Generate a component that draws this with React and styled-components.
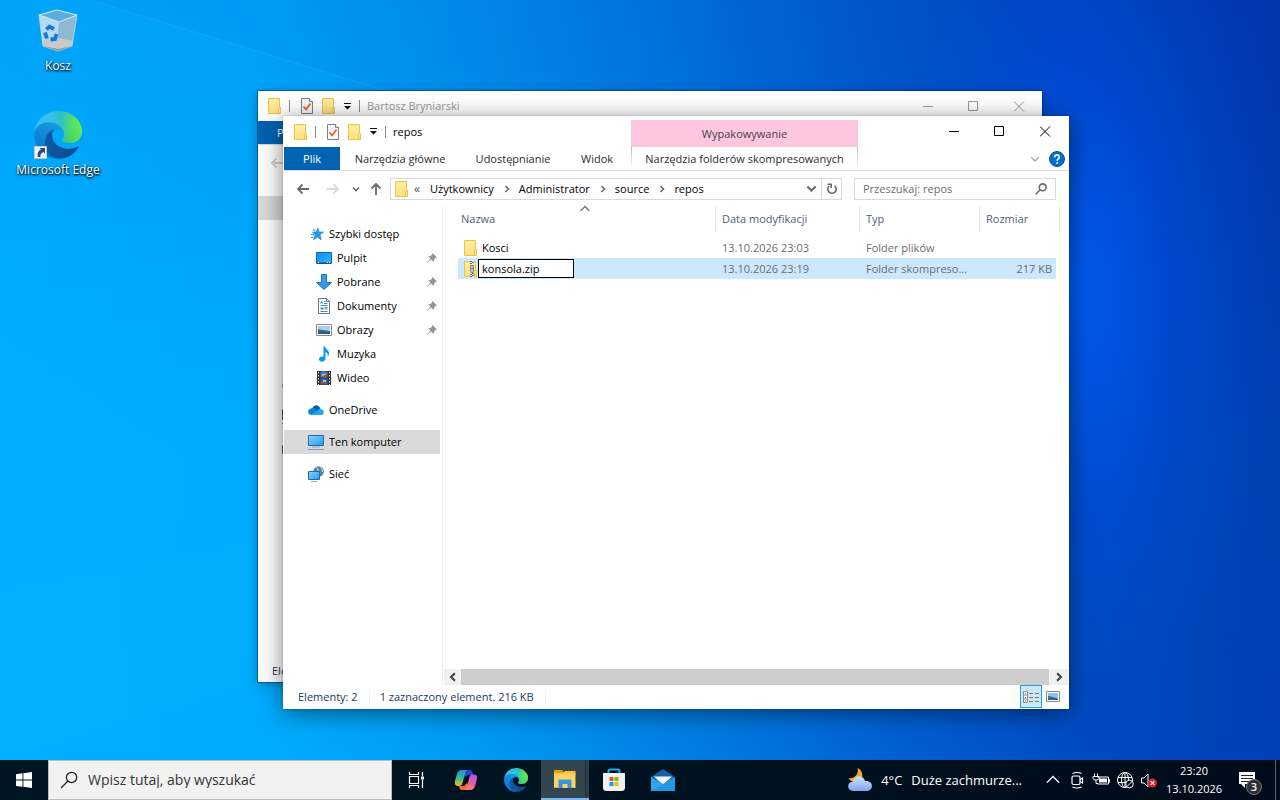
import React, { useId } from "react";
import styled, { createGlobalStyle, css } from "styled-components";

const GlobalStyle = createGlobalStyle`
  *, *::before, *::after { box-sizing: border-box; }
  body {
    margin: 0;
    font-family: "Open Sans", "Noto Sans", sans-serif;
    font-size: 11px;
    line-height: 16px;
    color: #000;
  }
  button, input { font: inherit; color: inherit; }
  a { color: inherit; text-decoration: none; }
  svg { display: block; flex: none; }
`;

/* ---------- desktop ---------- */

const Screen = styled.div`
  display: flex;
  flex-direction: column;
  height: 100vh;
  overflow: hidden;
`;

const Desktop = styled.main`
  position: relative;
  flex: 1;
  overflow: hidden;
  background:
    radial-gradient(ellipse 15% 58% at 84% 38%, rgba(0, 96, 255, 0.75), rgba(0, 80, 235, 0.35) 50%, rgba(0, 70, 220, 0) 100%),
    linear-gradient(180deg, rgba(0, 60, 180, 0.08), rgba(0, 200, 255, 0.06) 60%, rgba(0, 200, 255, 0.04)),
    linear-gradient(86deg, #00aeff 0%, #00a9fd 22%, #0096f0 37%, #007ae0 52%, #005acf 68%, #0044be 82%, #0036ae 100%);
`;

const Rays = styled.svg`
  position: absolute;
  inset: 0;
  width: 100%;
  height: 100%;
`;

const Shortcuts = styled.nav`
  position: relative;
  display: flex;
  flex-direction: column;
  align-items: center;
  gap: 37px;
  width: 116px;
  padding-top: 7px;
`;

const Shortcut = styled.a`
  display: flex;
  flex-direction: column;
  align-items: center;
  gap: 3px;
  color: #fff;
  font-size: 12px;
  white-space: nowrap;
  text-shadow: 0 1px 2px #000, 1px 1px 2px rgba(0, 0, 0, 0.8);
`;

/* ---------- window ---------- */

const Frame = styled.section`
  position: absolute;
  top: ${(p) => (p.$back ? 91 : 116)}px;
  left: ${(p) => (p.$back ? 258 : 283)}px;
  right: ${(p) => (p.$back ? 238 : 211)}px;
  bottom: ${(p) => (p.$back ? 78 : 51)}px;
  display: flex;
  flex-direction: column;
  padding: ${(p) => (p.$back ? 0 : "0 1px 1px")};
  background: #fff;
  box-shadow: ${(p) =>
    p.$back
      ? "0 0 0 1px rgba(0, 40, 80, 0.45), 0 2px 10px rgba(0, 0, 0, 0.3)"
      : "0 0 1px 0 rgba(0, 0, 0, 0.4), 0 4px 22px rgba(0, 0, 0, 0.5)"};
`;

const TitleBar = styled.header`
  display: flex;
  height: ${(p) => (p.$back ? 30 : 31)}px;
  color: ${(p) => (p.$back ? "#999" : "#000")};
`;

const TitleArea = styled.div`
  display: flex;
  align-items: center;
  width: 347px;
  padding-left: 10px;
`;

const QuickButton = styled.button`
  display: flex;
  align-items: center;
  justify-content: center;
  width: ${(p) => p.$w || 22}px;
  height: 22px;
  padding: 0;
  border: 0;
  background: none;
`;

const Bar = styled.span`
  width: 1px;
  height: 12px;
  margin: ${(p) => p.$m || "0 6px 0 7px"};
  background: #8c8c8c;
`;

const Title = styled.h1`
  margin: 0;
  font-size: 11px;
  line-height: 16px;
  font-weight: 400;
`;

const ContextLabel = styled.div`
  width: 227px;
  margin-top: 4px;
  background: #fec6df;
  color: #444;
  text-align: center;
  line-height: 27px;
`;

const Captions = styled.div`
  display: flex;
  margin-left: auto;
`;

const CaptionButton = styled.button`
  display: flex;
  align-items: center;
  justify-content: center;
  width: 46px;
  height: 30px;
  padding: 0;
  border: 0;
  background: none;
`;

const RibbonTabs = styled.div`
  display: flex;
  height: 24px;
  border-bottom: 1px solid #dadbdc;
`;

const RibbonTab = styled.button`
  width: ${(p) => p.$w}px;
  padding: 0;
  border: 0;
  background: ${(p) => (p.$file ? "#0063b1" : "none")};
  color: ${(p) => (p.$file ? "#fff" : "#2b2b2b")};
  white-space: nowrap;
  ${(p) =>
    p.$context &&
    css`
      margin-left: 3px;
      background:
        linear-gradient(#bbb, #eee) left top / 1px 18px no-repeat,
        linear-gradient(#bbb, #eee) right top / 1px 18px no-repeat;
    `}
`;

const RibbonEnd = styled.div`
  display: flex;
  align-items: center;
  margin-left: auto;
  padding-right: 3px;
`;

const AddressRow = styled.div`
  display: flex;
  align-items: center;
  height: 35px;
  padding: 0 12px 0 6px;
`;

const NavButton = styled(QuickButton)`
  width: ${(p) => p.$w}px;
`;

const AddressBox = styled.div`
  display: flex;
  align-items: center;
  flex: 1;
  height: 22px;
  border: 1px solid #d9d9d9;
  padding-left: 3px;
`;

const Overflow = styled.a`
  width: 16px;
  margin-left: 4px;
  font-size: 12px;
  color: #555;
`;

const Crumb = styled.a`
  display: flex;
  align-items: center;
  gap: 9px;
  margin-right: 8px;
`;

const AddressEnd = styled.div`
  display: flex;
  height: 20px;
  margin-left: auto;
`;

const AddressButton = styled.button`
  display: flex;
  align-items: center;
  justify-content: center;
  width: 20px;
  padding: 0;
  border: 0;
  background: none;
  border-left: ${(p) => (p.$line ? "1px solid #d9d9d9" : 0)};
`;

const SearchBox = styled.label`
  display: flex;
  align-items: center;
  width: 202px;
  height: 22px;
  margin-left: 12px;
  padding: 0 8px;
  border: 1px solid #d9d9d9;
`;

const SearchInput = styled.input`
  flex: 1;
  min-width: 0;
  padding: 0;
  border: 0;
  outline: 0;
  background: none;
  &::placeholder { color: ${(p) => p.$hint || "#6d6d6d"}; opacity: 1; }
`;

const Body = styled.div`
  display: flex;
  flex: 1;
  min-height: 0;
`;

const Tree = styled.nav`
  width: 159px;
  padding: 16px 2px 0 0;
  border-right: 1px solid #f0f0f0;
`;

const TreeGroup = styled.ul`
  margin: 0 0 8px;
  padding: 0;
  list-style: none;
`;

const TreeItem = styled.a`
  display: flex;
  align-items: center;
  gap: 5px;
  height: 24px;
  padding: 0 3px 0 ${(p) => (p.$child ? 32 : 24)}px;
  background: ${(p) => (p.$selected ? "#d9d9d9" : "none")};
`;

const Pin = styled.span`
  margin-left: auto;
`;

const Content = styled.div`
  display: flex;
  flex-direction: column;
  flex: 1;
  min-width: 0;
  padding-left: 1px;
`;

const Files = styled.table`
  width: 602px;
  margin-left: 14px;
  border-collapse: separate;
  border-spacing: 0;
  table-layout: fixed;
  color: #6d6d6d;
`;

const HeadCell = styled.th`
  position: relative;
  width: ${(p) => p.$w}px;
  height: 31px;
  padding: 0 0 5px ${(p) => p.$pad || 6}px;
  background: linear-gradient(#e2e2e2, #e2e2e2) right top / 1px 25px no-repeat;
  color: #4c607a;
  font-weight: 400;
  text-align: left;
`;

const SortMark = styled.span`
  position: absolute;
  top: -2px;
  left: 122px;
`;

const Cell = styled.td`
  height: 21px;
  padding: 0 0 0 6px;
  background: ${(p) => (p.$selected ? "#cce8ff" : "none")};
  background-clip: padding-box;
  white-space: nowrap;
  ${(p) =>
    p.$size &&
    css`
      padding-right: 4px;
      border-right: 4px solid transparent;
      text-align: right;
    `}
`;

const NameBox = styled.div`
  display: flex;
  align-items: center;
  height: 20px;
  color: #000;
`;

const NameText = styled.span`
  padding-left: 4px;
`;

const NameInput = styled.input`
  width: 96px;
  height: 19px;
  padding: 0 3px;
  border: 1px solid #000;
  border-radius: 0;
  outline: 0;
  background: #fff;
`;

const ScrollBar = styled.div`
  display: flex;
  height: 16px;
  margin-top: auto;
  background: #f0f0f0;
`;

const ScrollButton = styled.button`
  display: flex;
  align-items: center;
  justify-content: center;
  width: ${(p) => p.$w}px;
  padding: 0;
  border: 0;
  background: none;
`;

const Thumb = styled.div`
  flex: 1;
  background: #cdcdcd;
`;

const StatusBar = styled.footer`
  display: flex;
  align-items: center;
  height: 23px;
  padding: 0 4px 0 14px;
  color: #1e395b;
`;

const StatusText = styled.span`
  padding: 0 11px 0 0;
  margin-right: 10px;
  border-right: 1px solid #f0f0f0;
`;

const Views = styled.div`
  display: flex;
  margin-left: auto;
`;

const ViewButton = styled.button`
  display: flex;
  align-items: center;
  justify-content: center;
  width: 22px;
  height: 23px;
  padding: 0;
  border: 1px solid ${(p) => (p.$on ? "#26a0da" : "transparent")};
  background: ${(p) => (p.$on ? "#cbe8f6" : "none")};
`;

/* ---------- taskbar ---------- */

const Taskbar = styled.footer`
  display: flex;
  height: 40px;
  background: linear-gradient(90deg, #001722, #00121f 50%, #000b1b);
  color: #fff;
`;

const TaskButton = styled.button`
  display: flex;
  align-items: center;
  justify-content: center;
  width: ${(p) => p.$w || 49}px;
  padding: 0;
  border: 0;
  background: none;
  ${(p) =>
    p.$active &&
    css`
      background: linear-gradient(90deg, #33454f 44px, #1d2f39 44px, #1d2f39 45px, #2b3d47 45px);
      border-bottom: 2px solid #76b9ed;
    `}
`;

const TaskSearch = styled.label`
  display: flex;
  align-items: center;
  width: 344px;
  padding-left: 11px;
  gap: 10px;
  border: 1px solid #bcbcbc;
  background: #f2f2f2;
  color: #2b2b2b;
  font-size: 14px;
`;

const Weather = styled.button`
  display: flex;
  align-items: center;
  gap: 9px;
  margin-left: auto;
  padding: 0;
  border: 0;
  background: none;
  color: #fff;
  font-size: 13px;
  white-space: nowrap;
`;

const Tray = styled.div`
  display: flex;
  padding-left: 19px;
`;

const Clock = styled.button`
  display: flex;
  flex-direction: column;
  align-items: center;
  justify-content: center;
  width: 66px;
  padding: 0;
  border: 0;
  background: none;
  line-height: 18px;
`;

const Notices = styled(TaskButton)`
  position: relative;
  width: 48px;
  padding-right: 8px;
`;

const Badge = styled.span`
  position: absolute;
  left: 19px;
  top: 19px;
  width: 16px;
  height: 16px;
  border: 1px solid #777;
  border-radius: 50%;
  background: #2b2f33;
  font-weight: 600;
  line-height: 14px;
  text-align: center;
`;

const Peek = styled.button`
  width: 5px;
  padding: 0;
  border: 0;
  border-left: 1px solid #59636b;
  background: none;
`;

/* ---------- drawings ---------- */

function Folder({ zip }) {
  const id = useId();
  return (
    <svg width="14" height="16" viewBox="0 0 14 16">
      <defs>
        <linearGradient id={id} x1="0" y1="0" x2="0" y2="1">
          <stop offset="0" stopColor="#ffecA0" />
          <stop offset="1" stopColor="#ffe083" />
        </linearGradient>
      </defs>
      <path d="M.5.5h11v10h1v5h-12z" fill={`url(#${id})`} stroke="#eac54b" />
      <path d="M10.500 15V10.500q0-1 2-1V15.500z" fill="#ffe78f" stroke="#eac54b" />
      {zip && (
        <g>
          <path d="M6 0h4v16H6z" fill="#ece6d0" />
          <path d="M6 .5h2M8 1.500h2M6 2.500h2M8 12.500h2M6 13.500h2M8 14.500h2M6 15.500h2" stroke="#666" />
          <path d="M6.500 4.500h3v4l-.5 3h-2l-.5-3z" fill="#d4d4d4" stroke="#808080" />
          <path d="M7.500 6.500h1v2h-1z" fill="#555" />
        </g>
      )}
    </svg>
  );
}

const CheckPage = () => (
  <svg width="12" height="16" viewBox="0 0 12 16">
    <path d="M.5.5h8l3 3v12H.5z" fill="#f6f7f9" stroke="#808080" />
    <path d="M8.500.5v3h3" fill="#fff" stroke="#808080" />
    <path d="M2.500 8.500l2.500 3 4.500-6" fill="none" stroke="#e8581c" strokeWidth="1.700" />
  </svg>
);

const QatArrow = () => (
  <svg width="7" height="7" viewBox="0 0 7 7">
    <path d="M0 0h7v1H0zM0 3h7L3.500 6.500z" fill="#111" />
  </svg>
);

const CaptionIcon = ({ kind }) => (
  <svg width="11" height="11" viewBox="0 0 11 11" fill="none" stroke="currentColor">
    {kind === "min" && <path d="M1 5.500h10" />}
    {kind === "max" && <path d="M.5.5h9v9h-9z" />}
    {kind === "close" && <path d="M0 .5l10 10M10 .5l-10 10" />}
  </svg>
);

const Chevron = ({ dir = "right", size = 8, color = "#6a6a6a", w = 1.6 }) => {
  const d = {
    right: "M2.500 1l3 3-3 3",
    left: "M5.500 1l-3 3 3 3",
    down: "M1 2.500l3 3 3-3",
    up: "M.5 5.500l3.500-3.500 3.500 3.500",
  }[dir];
  return (
    <svg width={size} height={size} viewBox="0 0 8 8" fill="none" stroke={color} strokeWidth={w}>
      <path d={d} />
    </svg>
  );
};

const Arrow = ({ rotate = 0, color = "#6a6a6a" }) => (
  <svg width="14" height="14" viewBox="0 0 14 14" fill="none" stroke={color} strokeWidth="1.800">
    <path d="M13 7H2M6.500 2.500L2 7l4.500 4.500" transform={`rotate(${rotate} 7 7)`} />
  </svg>
);

const Refresh = () => (
  <svg width="12" height="12" viewBox="0 0 12 12" fill="none" stroke="#6a6a6a" strokeWidth="1.600">
    <path d="M8.500 2.700A4.200 4.200 0 1 1 3.200 3" />
    <path d="M5.200 5V1.200H1.500" />
  </svg>
);

const Lens = ({ size = 12, color = "#6a6a6a", w = 1.8 }) => (
  <svg width={size} height={size} viewBox="0 0 14 14" fill="none" stroke={color} strokeWidth={w}>
    <circle cx="9" cy="5" r="4" />
    <path d="M6.200 7.800L.8 13.200" />
  </svg>
);

const Help = () => (
  <svg width="16" height="16" viewBox="0 0 16 16">
    <circle cx="8" cy="8" r="7.500" fill="#0070cc" stroke="#084f96" />
    <path d="M5.700 6.200C5.700 3 10.400 3.200 10.300 5.900 10.300 7.500 8.200 7.700 8.200 9.700M8.200 11.200v1.600" fill="none" stroke="#fff" strokeWidth="1.700" />
  </svg>
);

const PinIcon = () => (
  <svg width="10" height="10" viewBox="0 0 10 10" fill="#8a97a3">
    <path d="M5.600 0L10 4.400 8.800 4.800 7 6.600 6.800 9 4 6.400.6 9.800 0 9.600 3.400 5.800 1.200 3.400 3.600 3 5.200 1.300z" />
  </svg>
);

function NavIcon({ kind }) {
  const id = useId();
  const u = `url(#${id})`;
  return (
    <svg width="16" height="16" viewBox="0 0 16 16">
      <defs>
        <linearGradient id={id} x1="0" y1="0" x2="1" y2="1">
          <stop offset="0" stopColor={kind === "desktop" ? "#0a8df0" : "#8fd3ff"} />
          <stop offset="1" stopColor={kind === "desktop" ? "#36b3ff" : "#1a9bf0"} />
        </linearGradient>
      </defs>
      {kind === "star" && (
        <g>
          <path d="M10 2l.9 4H15.500l-3.400 2.600 1 5.200-3.700-2.800L5.500 13.800l1.600-5L4.500 6h3.800z" fill="#1f9df0" stroke="#1478c0" strokeWidth=".6" />
          <path d="M5 4h3M3 8.500h3M3 11.500h2" stroke="#2a8fd8" />
        </g>
      )}
      {kind === "desktop" && (
        <g>
          <path d="M.5 2.500h15v11H.5z" fill={u} stroke="#0b67b2" />
          <path d="M1 13h14" stroke="#123f66" />
          <path d="M2 12.500h1M11 12.500h1M13 12.500h1" stroke="#fff" />
        </g>
      )}
      {kind === "down" && <path d="M5.500.5h5v8h5L8 15.500.5 8.500h5z" fill="#3b97e8" stroke="#2173bd" />}
      {kind === "doc" && (
        <g>
          <path d="M2.500.5h8l3 3v12h-11z" fill="#fff" stroke="#777" />
          <path d="M10.500.5v3h3" fill="none" stroke="#777" />
          <path d="M4.500 5.500l1-2 1 2M8 3.500h1.500M8 5.500h3.500M4.500 7.500h7M8.500 11h3M4.500 13.500h7" fill="none" stroke="#2b8ed6" />
          <path d="M4.500 9.500h3v2h-3z" fill="#4a7fa8" />
          <path d="M8.500 9.500h3" stroke="#777" />
        </g>
      )}
      {kind === "image" && (
        <g>
          <path d="M.5 2.500h15v11H.5z" fill="#fff" stroke="#8a8a8a" />
          <path d="M2 4h12v8H2z" fill="#a9d3f5" />
          <path d="M2 7q4 1 12 2v3H2z" fill="#3b6d73" />
          <path d="M2 10.500h12V12H2z" fill="#1f5c9c" />
        </g>
      )}
      {kind === "music" && (
        <path d="M7.500.5h1.600c.4 3 4.200 3.600 3.900 7.300-.2 1.300-.8 2.200-1.300 2.900.4-2.300-.6-4-2.200-4.600v6.500c0 4-6.500 4-6.500.600 0-2.200 2.600-3.300 4.500-2.500z" fill="#0a97f0" />
      )}
      {kind === "video" && (
        <g>
          <path d="M1 1h14v14H1z" fill="#333" />
          <path d="M4.500 1.500h7v6h-7z" fill="#3f7fd8" />
          <path d="M4.500 8.500h7v6h-7z" fill="#2c68c0" />
          <path d="M6 4h4v2H6zM7 10h3v2H7z" fill="#e4b53a" />
          <path d="M8 5h3v2H8zM5 12h3v2H5z" fill="#b8442a" />
          <path d="M2.500 2v13M13.500 2v13" stroke="#eee" strokeDasharray="1.500 1.500" />
        </g>
      )}
      {kind === "cloud" && (
        <g>
          <path d="M4.300 6.200C6 1.800 11.500 2.600 12.500 7L8 11z" fill="#0a62b4" />
          <path d="M3.500 6.200C-1 6.700-.8 13 3.500 13L9.500 9.500C8 6.500 5.500 5.800 3.500 6.200z" fill="#0f83d8" />
          <path d="M9.500 8.500c2.500-3 6.500-.8 6.300 2 0 1.500-1 2.500-2.800 2.500H3.500z" fill="#27a4ee" />
        </g>
      )}
      {kind === "pc" && (
        <g>
          <path d="M.5 1.500h15v10H.5z" fill={u} stroke="#2c6a9c" />
          <path d="M4 13h8" stroke="#8fa7bd" />
          <path d="M0 15.500h16" stroke="#7f9cc2" />
        </g>
      )}
      {kind === "net" && (
        <g>
          <circle cx="10.500" cy="5.500" r="5.300" fill="#4f86a6" />
          <path d="M8 1.500q3 1 2 4M12.500 1.500q2.500 2 2 4.500" stroke="#c5dbe6" fill="none" />
          <path d="M.5 5.500h11v8H.5z" fill={u} stroke="#2c6a9c" />
          <path d="M3 15.500h6" stroke="#8fa7bd" />
        </g>
      )}
    </svg>
  );
}

function EdgeLogo({ size }) {
  const id = useId();
  return (
    <svg width={size} height={size} viewBox="0 0 256 256">
      <defs>
        <linearGradient id={id + "a"} x1="0" y1="0" x2="1" y2="0">
          <stop offset="0" stopColor="#0c59a4" />
          <stop offset="1" stopColor="#114a8b" />
        </linearGradient>
        <linearGradient id={id + "b"} x1=".6" y1="0" x2=".3" y2="1">
          <stop offset="0" stopColor="#1b9de2" />
          <stop offset=".5" stopColor="#0c84d9" />
          <stop offset="1" stopColor="#0078d4" />
        </linearGradient>
        <radialGradient id={id + "c"} gradientUnits="userSpaceOnUse" cx="30" cy="65" r="260">
          <stop offset="0" stopColor="#35c1f1" />
          <stop offset=".25" stopColor="#34c1ed" />
          <stop offset=".5" stopColor="#2bc3c2" />
          <stop offset=".75" stopColor="#4bd061" />
          <stop offset="1" stopColor="#66eb6e" />
        </radialGradient>
        <radialGradient id={id + "d"} gradientUnits="userSpaceOnUse" cx="245" cy="75" r="100">
          <stop offset="0" stopColor="#66eb4e" stopOpacity=".9" />
          <stop offset="1" stopColor="#66eb6e" stopOpacity="0" />
        </radialGradient>
      </defs>
      <g transform="translate(-4.630 -4.920)">
        <path fill={`url(#${id}b)`} d="M110.340 246.340A79.200 79.200 0 0 1 87.600 225a80.720 80.720 0 0 1 29.530-120c3.120-1.470 8.450-4.130 15.540-4a32.350 32.350 0 0 1 25.690 13 31.880 31.880 0 0 1 6.360 18.660c0-.21 24.460-79.600-80-79.600-43.900 0-80 41.660-80 78.210a130.150 130.150 0 0 0 12.110 56 128 128 0 0 0 156.380 67.110 75.550 75.550 0 0 1-62.780-8z" />
        <path fill={`url(#${id}a)`} d="M235.680 195.460a93.730 93.730 0 0 1-10.540 4.710 101.870 101.870 0 0 1-35.900 6.460c-47.320 0-88.540-32.550-88.540-74.320A31.480 31.480 0 0 1 117.130 105c-42.800 1.800-53.800 46.400-53.800 72.530 0 73.880 68.090 81.370 82.760 81.370 7.910 0 19.840-2.300 27-4.560l1.310-.44a128.340 128.340 0 0 0 66.600-52.800 4 4 0 0 0-5.320-5.640z" />
        {["c", "d"].map((g) => (
          <path key={g} fill={`url(#${id}${g})`} d="M156.940 153.780c-.81 1.050-3.300 2.500-3.300 5.660 0 2.610 1.700 5.120 4.720 7.230 14.380 10 41.490 8.680 41.560 8.680A59.560 59.560 0 0 0 230.190 167a61.380 61.380 0 0 0 30.430-52.880c.26-22.410-8-37.310-11.340-43.910C228.090 28.760 182.350 4.920 132.610 4.920a128 128 0 0 0-128 126.200c.48-36.540 36.800-66.050 80-66.050 3.500 0 23.460.34 42 10.070 16.340 8.580 24.900 18.940 30.850 29.210 6.180 10.670 7.280 24.150 7.280 29.520S162 147.200 156.940 153.780z" />
        ))}
      </g>
    </svg>
  );
}

const EdgeShortcut = () => (
  <svg width="48" height="48" viewBox="0 0 48 48">
    <EdgeLogo size={48} />
    <path d="M.5 35.500h12v12H.5z" fill="#f4f4f4" stroke="#c8c8c8" />
    <path d="M4 46c-1-4 .5-6.500 3-7.500L5.500 37H11v5.500l-1.600-1.600C7 42 6 43.500 6.500 46z" fill="#1d4f91" />
  </svg>
);

const Bin = () => (
  <svg width="40" height="48" viewBox="0 0 40 48">
    <path d="M1 8L21 15 20 44 5 39z" fill="#b5d9ee" />
    <path d="M39 8L21 15 20 44 34 39z" fill="#8fb9d0" />
    <path d="M1 8L19 3 39 8 21 15z" fill="#5aaede" stroke="#dbeef8" />
    <path d="M1 8l4 31 15 5 14-5 5-31" fill="none" stroke="#c7dfec" strokeOpacity=".8" />
    <path d="M5 39l-.6-5L20 31l15 3-1 5-14 5z" fill="#c9c9cb" />
    <path d="M5 39l15 5 14-5-14 3z" fill="#8f979c" />
    <g fill="none" stroke="#0f7ad6" strokeWidth="3.800">
      <path d="M8.500 22.500l3-3 4.500 2.500" />
      <path d="M7 25.500L9 31.500" />
      <path d="M12.500 32.500l4.500-.5 1.500-5" />
    </g>
  </svg>
);

const WindowsLogo = () => (
  <svg width="16" height="16" viewBox="0 0 16 16" fill="#fff">
    <path d="M0 2.200L6.500 1.300V7.600H0zM7.400 1.200L16 0v7.600H7.400zM0 8.500h6.500v6.300L0 13.900zM7.400 8.500H16V16l-8.600-1.200z" />
  </svg>
);

const TaskView = () => (
  <svg width="17" height="16" viewBox="0 0 17 16" fill="none" stroke="#fff">
    <path d="M1.500 0v2.500h9V0M1.500 16v-2.500h9V16M1.500 4.500h9v7h-9zM14.500 0v4M14.500 8v8" strokeWidth="1.200" />
    <path d="M13 4.500h3v3h-3z" fill="#fff" stroke="none" />
  </svg>
);

function Copilot() {
  const id = useId();
  return (
    <svg width="24" height="24" viewBox="0 0 24 24">
      <defs>
        <linearGradient id={id + "a"} x1=".3" y1="0" x2=".2" y2="1">
          <stop offset="0" stopColor="#1a90ee" />
          <stop offset=".5" stopColor="#3dba8c" />
          <stop offset="1" stopColor="#f0c419" />
        </linearGradient>
        <linearGradient id={id + "b"} x1=".8" y1="0" x2=".2" y2="1">
          <stop offset="0" stopColor="#a858e8" />
          <stop offset=".5" stopColor="#ee5aa0" />
          <stop offset="1" stopColor="#fa8a5c" />
        </linearGradient>
      </defs>
      <path d="M8 2h8c2 0 2.500 2 3 5h-5l-3 2z" fill="#1c48d8" />
      <path d="M16 22H8c-2 0-2.500-1.500-3-4h5l3-3z" fill="#f26a3a" />
      <path d="M8 2h6c-2 0-2.500 2-3 4L8.500 15c-.6 2-1.500 3-3.500 3H4c-3 0-3.500-2.500-3-5L3 6c.8-2.500 2-4 5-4z" fill={`url(#${id}a)`} />
      <path d="M16 22h-6c2 0 2.500-2 3-4L15.500 9c.6-2 1.500-2.500 3.500-2.500h1c3 0 3.500 2.500 3 4.500L21 18c-.8 2.500-2 4-5 4z" fill={`url(#${id}b)`} />
    </svg>
  );
}

const Explorer = () => (
  <svg width="22" height="20" viewBox="0 0 22 20">
    <path d="M0 1h8l2 2h11v4H0z" fill="#e0a010" />
    <path d="M0 4h21.500v15H0z" fill="#fcd364" />
    <path d="M0 4h9l2-2h10.500v3H0z" fill="#f8c43a" />
    <path d="M4.500 19v-7.500q0-1 1-1h11q1 0 1 1V19h-4v-4h-5v4z" fill="#3a94dc" />
    <path d="M0 18.500h4.500M17.500 18.500h4" stroke="#eab030" />
  </svg>
);

const Store = () => (
  <svg width="24" height="24" viewBox="0 0 24 24">
    <path d="M6.500 6V3q0-1.500 1.500-1.500h8q1.500 0 1.500 1.500v3" fill="none" stroke="#1ea5ea" strokeWidth="2" />
    <path d="M1 5h22v14.500q0 3.500-3.500 3.500h-15Q1 23 1 19.500z" fill="#f1f1f3" />
    <path d="M7.500 9h4v4h-4z" fill="#f25022" />
    <path d="M12.500 9h4v4h-4z" fill="#7fba00" />
    <path d="M7.500 14h4v4h-4z" fill="#00a4ef" />
    <path d="M12.500 14h4v4h-4z" fill="#ffb900" />
  </svg>
);

const Mail = () => (
  <svg width="24" height="24" viewBox="0 0 24 24">
    <path d="M0 9L12 1l12 8v4H0z" fill="#0f63ad" />
    <path d="M3 8.500h18L12 17z" fill="#f5f5f5" />
    <path d="M0 9l12 7 12-7v14H0z" fill="#2ca7ee" />
    <path d="M0 23l24-14v14z" fill="#1b8fe0" fillOpacity=".6" />
  </svg>
);

function MoonCloud() {
  const id = useId();
  return (
    <svg width="24" height="24" viewBox="0 0 24 24">
      <defs>
        <linearGradient id={id} x1="0" y1="0" x2="0" y2="1">
          <stop offset="0" stopColor="#cfe0ff" />
          <stop offset="1" stopColor="#7da8f2" />
        </linearGradient>
      </defs>
      <path d="M9.500 0c5 2 7 9 2 12.500-4 2.500-9 1.500-11-2.500C7 11 11 6 9.500 0z" fill="#f6a623" />
      <path d="M5.500 23c-7 0-7-9-.5-9.500C6.500 7 15.500 6.500 17 13c9-1 9 10 1.500 10z" fill={`url(#${id})`} />
    </svg>
  );
}

const MeetNow = () => (
  <svg width="24" height="18" viewBox="0 0 24 18" fill="none" stroke="#fff" strokeWidth="1.200">
    <path d="M7.500 2.500Q12 .5 16.500 2.500M7.500 16q4.500 2 9 0" />
    <rect x="7" y="5" width="8" height="8.500" rx="1.500" />
    <path d="M15 8.500l2.500-1.500v5L15 10.500" />
  </svg>
);

const Battery = () => (
  <svg width="24" height="18" viewBox="0 0 24 18" fill="none" stroke="#fff">
    <path d="M8 6h11.500v7H8.500M20.500 8v3.500" />
    <path d="M10 7.500h8v4h-8z" fill="#fff" stroke="none" />
    <path d="M5.500 2.500V5M8.500 2.500V5M4 5.500h6v2q0 1.500-3 1.500T4 7.500zM7 9v3.500h2" />
  </svg>
);

const Globe = () => (
  <svg width="24" height="18" viewBox="0 0 24 18" fill="none" stroke="#fff">
    <circle cx="12" cy="9" r="7.500" />
    <ellipse cx="12" cy="9" rx="3.500" ry="7.500" />
    <path d="M5 6.500h14M5 11.500h14M12 1.500v15" />
    <circle cx="16.500" cy="13" r="3.800" fill="#000d1c" />
    <path d="M14 15.500l5-5" />
  </svg>
);

const Muted = () => (
  <svg width="22" height="18" viewBox="0 0 22 18">
    <path d="M3.500 7h2.500l4-4v13l-4-4H3.500z" fill="none" stroke="#fff" />
    <circle cx="14.500" cy="12" r="4.500" fill="#e0202c" />
    <path d="M12.700 10.200l3.600 3.600M16.300 10.200l-3.600 3.600" stroke="#fff" strokeWidth="1.200" />
  </svg>
);

const Message = () => (
  <svg width="18" height="18" viewBox="0 0 18 18">
    <path d="M1 1h16v12H7v4l-4-4H1z" fill="#fff" />
    <path d="M3 4.500h12M3 7.500h12M3 10.500h9" stroke="#1b2530" />
  </svg>
);

const DetailsIcon = () => (
  <svg width="16" height="14" viewBox="0 0 16 14" fill="none">
    <path d="M.5 1.500h4v11h-4zM.5 5h4M.5 9h4" stroke="#8a8a8a" fill="#fff" />
    <path d="M2 3.500h1M2 7.500h1" stroke="#3b7fb8" />
    <path d="M2 11h1" stroke="#c83030" />
    <path d="M6 3.500h4M12 3.500h4M6 7.500h4M12 7.500h4M6 11.500h4M12 11.500h4" stroke="#777" />
  </svg>
);

const LargeIcon = () => (
  <svg width="14" height="12" viewBox="0 0 14 12">
    <path d="M.5.5h13v10H.5z" fill="#fff" stroke="#8a8a8a" />
    <path d="M2 2h10v7H2z" fill="#8fc1ee" />
    <path d="M2 5q4 0 10 3v1H2z" fill="#3c7a58" />
    <path d="M2 7.500h10V9H2z" fill="#1f5fae" />
  </svg>
);

/* ---------- parts ---------- */

const TREE = [
  [
    { icon: "star", label: "Szybki dostęp" },
    { icon: "desktop", label: "Pulpit", child: true, pin: true },
    { icon: "down", label: "Pobrane", child: true, pin: true },
    { icon: "doc", label: "Dokumenty", child: true, pin: true },
    { icon: "image", label: "Obrazy", child: true, pin: true },
    { icon: "music", label: "Muzyka", child: true },
    { icon: "video", label: "Wideo", child: true },
  ],
  [{ icon: "cloud", label: "OneDrive" }],
  [{ icon: "pc", label: "Ten komputer" }],
  [{ icon: "net", label: "Sieć" }],
];

function NavTree({ back, selected }) {
  return (
    <Tree>
      {TREE.map((group) => (
        <TreeGroup key={group[0].icon}>
          {group.map((item) => (
            <li key={item.icon}>
              <TreeItem href="#" aria-label={item.label} $child={item.child} $selected={item.icon === selected}>
                <NavIcon kind={item.icon} />
                {!back && <span>{item.label}</span>}
                {!back && item.pin && <Pin><PinIcon /></Pin>}
              </TreeItem>
            </li>
          ))}
        </TreeGroup>
      ))}
    </Tree>
  );
}

function WindowTitle({ title, back, context }) {
  return (
    <TitleBar $back={back}>
      <TitleArea>
        <Folder />
        <Bar />
        <QuickButton aria-label="Właściwości"><CheckPage /></QuickButton>
        <QuickButton aria-label="Nowy folder"><Folder /></QuickButton>
        <QuickButton $w={14} aria-label="Dostosuj pasek"><QatArrow /></QuickButton>
        <Bar $m="0 7px 0 5px" />
        <Title>{title}</Title>
      </TitleArea>
      {context && <ContextLabel>{context}</ContextLabel>}
      <Captions>
        <CaptionButton aria-label="Minimalizuj"><CaptionIcon kind="min" /></CaptionButton>
        <CaptionButton aria-label="Maksymalizuj"><CaptionIcon kind="max" /></CaptionButton>
        <CaptionButton aria-label="Zamknij"><CaptionIcon kind="close" /></CaptionButton>
      </Captions>
    </TitleBar>
  );
}

function BackWindow() {
  return (
    <Frame $back>
      <WindowTitle back title="Bartosz Bryniarski" />
      <RibbonTabs>
        <RibbonTab $file $w={56}>Plik</RibbonTab>
      </RibbonTabs>
      <AddressRow>
        <NavButton $w={26} aria-label="Wstecz"><Arrow color="#d0d0d0" /></NavButton>
      </AddressRow>
      <Body>
        <NavTree back selected="star" />
      </Body>
      <StatusBar><span>Elementy</span></StatusBar>
    </Frame>
  );
}

const PATH = ["Użytkownicy", "Administrator", "source"];

function FrontWindow() {
  return (
    <Frame>
      <WindowTitle title="repos" context="Wypakowywanie" />
      <RibbonTabs>
        <RibbonTab $file $w={56}>Plik</RibbonTab>
        <RibbonTab $w={120}>Narzędzia główne</RibbonTab>
        <RibbonTab $w={106}>Udostępnianie</RibbonTab>
        <RibbonTab $w={62}>Widok</RibbonTab>
        <RibbonTab $w={227} $context>Narzędzia folderów skompresowanych</RibbonTab>
        <RibbonEnd>
          <QuickButton $w={28} aria-label="Rozwiń wstążkę"><Chevron dir="down" size={10} color="#999" w={1} /></QuickButton>
          <QuickButton $w={16} aria-label="Pomoc"><Help /></QuickButton>
        </RibbonEnd>
      </RibbonTabs>
      <AddressRow>
        <NavButton $w={26} aria-label="Wstecz"><Arrow /></NavButton>
        <NavButton $w={34} aria-label="Dalej"><Arrow rotate={180} color="#d9d9d9" /></NavButton>
        <NavButton $w={12} aria-label="Ostatnie"><Chevron dir="down" /></NavButton>
        <NavButton $w={28} aria-label="W górę"><Arrow rotate={90} /></NavButton>
        <AddressBox>
          <NavButton $w={16} aria-label="Folder"><Folder /></NavButton>
          <Overflow href="#">«</Overflow>
          {PATH.map((name) => (
            <Crumb key={name} href="#">{name}<Chevron /></Crumb>
          ))}
          <Crumb href="#">repos</Crumb>
          <AddressEnd>
            <AddressButton aria-label="Poprzednie lokalizacje"><Chevron dir="down" size={11} /></AddressButton>
            <AddressButton $line aria-label="Odśwież"><Refresh /></AddressButton>
          </AddressEnd>
        </AddressBox>
        <SearchBox>
          <SearchInput aria-label="Przeszukaj: repos" placeholder="Przeszukaj: repos" />
          <Lens />
        </SearchBox>
      </AddressRow>
      <Body>
        <NavTree selected="pc" />
        <Content>
          <Files>
            <thead>
              <tr>
                <HeadCell $w={258} $pad={3}>
                  Nazwa
                  <SortMark><Chevron dir="up" size={10} w={1} /></SortMark>
                </HeadCell>
                <HeadCell $w={144}>Data modyfikacji</HeadCell>
                <HeadCell $w={120}>Typ</HeadCell>
                <HeadCell $w={80}>Rozmiar</HeadCell>
              </tr>
            </thead>
            <tbody>
              <tr>
                <Cell><NameBox><Folder /><NameText>Kosci</NameText></NameBox></Cell>
                <Cell>13.10.2026 23:03</Cell>
                <Cell>Folder plików</Cell>
                <Cell $size />
              </tr>
              <tr>
                <Cell $selected>
                  <NameBox>
                    <Folder zip />
                    <NameInput aria-label="Nazwa pliku" defaultValue="konsola.zip" />
                  </NameBox>
                </Cell>
                <Cell $selected>13.10.2026 23:19</Cell>
                <Cell $selected>Folder skompreso...</Cell>
                <Cell $selected $size>217 KB</Cell>
              </tr>
            </tbody>
          </Files>
          <ScrollBar>
            <ScrollButton $w={17} aria-label="Przewiń w lewo"><Chevron dir="left" size={10} color="#444" w={1.8} /></ScrollButton>
            <Thumb />
            <ScrollButton $w={19} aria-label="Przewiń w prawo"><Chevron size={10} color="#444" w={1.8} /></ScrollButton>
          </ScrollBar>
        </Content>
      </Body>
      <StatusBar>
        <StatusText>Elementy: 2</StatusText>
        <StatusText>1 zaznaczony element. 216 KB</StatusText>
        <Views>
          <ViewButton $on aria-label="Szczegóły"><DetailsIcon /></ViewButton>
          <ViewButton aria-label="Duże ikony"><LargeIcon /></ViewButton>
        </Views>
      </StatusBar>
    </Frame>
  );
}

function TaskbarRow() {
  return (
    <Taskbar>
      <TaskButton $w={48} aria-label="Start"><WindowsLogo /></TaskButton>
      <TaskSearch>
        <Lens size={18} color="#222" w={1} />
        <SearchInput $hint="#333" aria-label="Wpisz tutaj, aby wyszukać" placeholder="Wpisz tutaj, aby wyszukać" />
      </TaskSearch>
      <TaskButton aria-label="Widok zadań"><TaskView /></TaskButton>
      <TaskButton $w={50} aria-label="Copilot"><Copilot /></TaskButton>
      <TaskButton $w={50} aria-label="Microsoft Edge"><EdgeLogo size={24} /></TaskButton>
      <TaskButton $w={48} $active aria-label="Eksplorator plików"><Explorer /></TaskButton>
      <TaskButton aria-label="Microsoft Store"><Store /></TaskButton>
      <TaskButton aria-label="Poczta"><Mail /></TaskButton>
      <Weather>
        <MoonCloud />
        <span>4°C</span>
        <span>Duże zachmurze...</span>
      </Weather>
      <Tray>
        <TaskButton $w={24} aria-label="Pokaż ukryte ikony"><Chevron dir="up" size={14} color="#fff" w={0.8} /></TaskButton>
        <TaskButton $w={24} aria-label="Spotkanie"><MeetNow /></TaskButton>
        <TaskButton $w={24} aria-label="Bateria"><Battery /></TaskButton>
        <TaskButton $w={24} aria-label="Sieć"><Globe /></TaskButton>
        <TaskButton $w={24} aria-label="Głośność"><Muted /></TaskButton>
        <Clock>
          <span>23:20</span>
          <span>13.10.2026</span>
        </Clock>
        <Notices aria-label="Powiadomienia">
          <Message />
          <Badge>3</Badge>
        </Notices>
        <Peek aria-label="Pokaż pulpit" />
      </Tray>
    </Taskbar>
  );
}

export default function App() {
  return (
    <Screen>
      <GlobalStyle />
      <Desktop>
        <Rays viewBox="0 0 1280 760" preserveAspectRatio="none" aria-hidden="true">
          <path d="M90 0L1040 290V0z" fill="#0050c0" fillOpacity=".05" />
          <path d="M90 0L400 95" stroke="#5cc4ff" strokeOpacity=".2" />
          <path d="M0 594L258 538V683L0 760z" fill="#20c8ff" fillOpacity=".05" />
        </Rays>
        <Shortcuts>
          <Shortcut href="#"><Bin />Kosz</Shortcut>
          <Shortcut href="#"><EdgeShortcut />Microsoft Edge</Shortcut>
        </Shortcuts>
        <BackWindow />
        <FrontWindow />
      </Desktop>
      <TaskbarRow />
    </Screen>
  );
}
